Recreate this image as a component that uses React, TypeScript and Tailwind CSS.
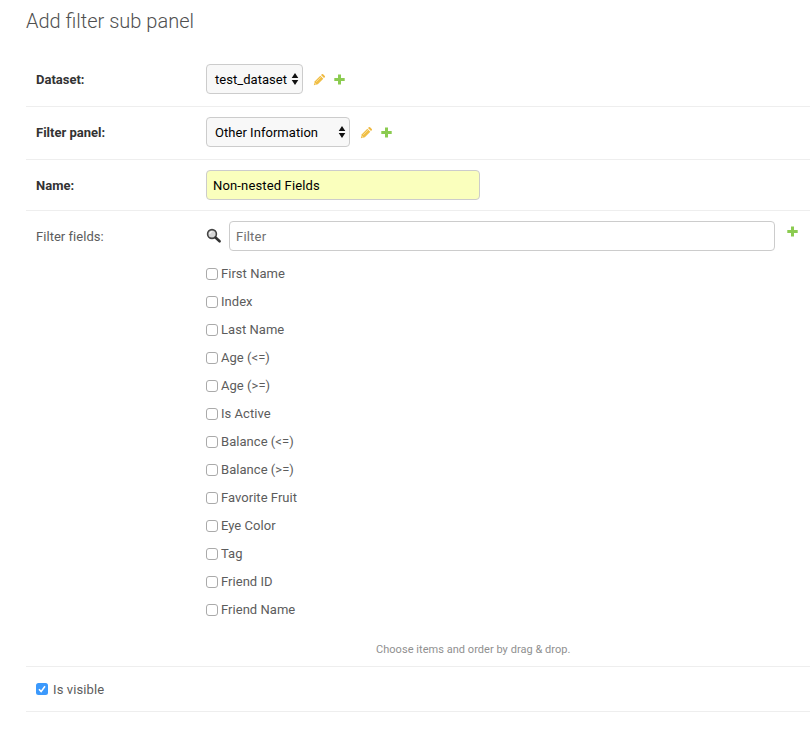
import React from "react";

const fields = [
  "First Name",
  "Index",
  "Last Name",
  "Age (<=)",
  "Age (>=)",
  "Is Active",
  "Balance (<=)",
  "Balance (>=)",
  "Favorite Fruit",
  "Eye Color",
  "Tag",
  "Friend ID",
  "Friend Name",
];

function Plus() {
  return (
    <svg className="block h-[13px] w-[13px]" viewBox="0 0 13 13">
      <path d="M5 1.5h3v3.5h3.7v3H8v3.5H5V8H1.3V5H5z" fill="#8bcb50" />
    </svg>
  );
}

function Pencil() {
  return (
    <svg className="block h-[13px] w-[13px]" viewBox="0 0 13 13">
      <path d="M.8 12.2l1-4L7.3 2.7l3 3-5.5 5.5z" fill="#f0be45" />
      <path d="M8 2l.8-.8q.7-.6 1.3 0l1.7 1.7q.6.6 0 1.3l-.8.8z" fill="#efb940" />
      <path d="M3.2 8.8l4.8-4.7" stroke="#fbe3a5" strokeWidth=".8" />
      <path d="M1.8 10.3l1 .9" stroke="#fff" strokeWidth=".8" />
    </svg>
  );
}

function Magnifier() {
  return (
    <svg className="block h-4 w-4" viewBox="0 0 16 16">
      <circle cx="6" cy="6" r="4.4" fill="#d6d6d6" stroke="#444" strokeWidth="1.6" />
      <path d="M3.7 6a2.6 2.6 0 0 1 2.6-2.4" fill="none" stroke="#fff" strokeWidth="1" />
      <path d="M9.5 9.5l4.1 3.8" stroke="#333" strokeWidth="2.6" strokeLinecap="round" />
    </svg>
  );
}

function Select({ text, width }: { text: string; width: string }) {
  return (
    <div className={`flex h-[30px] items-center justify-between rounded-[4px] border border-[#ccc] bg-[#f8f8f8] pr-[3px] pl-2 text-black ${width}`}>
      <span className="pt-0.5">{text}</span>
      <svg className="h-3 w-2" viewBox="0 0 8 12">
        <path d="M4 0l3.3 5H.7zM4 12L.7 7h6.6z" fill="#111" />
      </svg>
    </div>
  );
}

function Row({ label, height, children }: { label: string; height: string; children: React.ReactNode }) {
  return (
    <div className={`flex border-b border-[#eee] pt-[10px] pl-[10px] ${height}`}>
      <div className="h-[30px] w-[170px] leading-8 font-bold tracking-[0px] text-[#333]">{label}</div>
      {children}
    </div>
  );
}

export default function App() {
  return (
    <div className="h-[740px] w-[810px] overflow-hidden bg-white pl-[26px] font-['Roboto','Liberation_Sans',sans-serif] text-[13px] tracking-[0.04px] text-[#5c5c5c]">
      <h1 className="h-[54px] pt-[9px] text-[20px] leading-[25px] font-light tracking-[0px] text-[#505050]">Add filter sub panel</h1>
      <Row label="Dataset:" height="h-[53px]">
        <Select text="test_dataset" width="w-[97px]" />
        <div className="flex h-[30px] items-center gap-[7px] pl-[10px]">
          <Pencil />
          <Plus />
        </div>
      </Row>
      <Row label="Filter panel:" height="h-[53px]">
        <Select text="Other Information" width="w-[144px]" />
        <div className="flex h-[30px] items-center gap-[7px] pl-[10px]">
          <Pencil />
          <Plus />
        </div>
      </Row>
      <Row label="Name:" height="h-[51px]">
        <div className="flex h-[30px] w-[274px] items-center rounded-[4px] border border-[#ccc] bg-[#faffbd] pt-0.5 pl-1.5 tracking-[0.15px] text-black">
          Non-nested Fields
        </div>
      </Row>
      <div className="flex h-[456px] border-b border-[#eee] pt-[10px] pl-[10px]">
        <div className="w-[170px] leading-8">Filter fields:</div>
        <div className="w-[569px]">
          <div className="flex h-[30px] items-center">
            <Magnifier />
            <div className="ml-[7px] flex h-[30px] flex-1 items-center rounded-[4px] border border-[#ccc] pt-0.5 pl-1.5 tracking-[0.2px] text-[#707070]">Filter</div>
          </div>
          <ul className="pt-[9px]">
            {fields.map((f) => (
              <li key={f} className="flex h-7 items-center">
                <span className="mr-[3px] h-3 w-3 rounded-[3px] border border-[#aaa] bg-white" />
                <span>{f}</span>
              </li>
            ))}
          </ul>
          <p className="pt-[17px] pl-[170px] text-[11px] leading-[17px] text-[#909090]">Choose items and order by drag &amp; drop.</p>
        </div>
        <div className="pt-1 pl-[11px]">
          <Plus />
        </div>
      </div>
      <div className="flex h-[45px] items-center border-b border-[#eee] pl-[10px]">
        <svg className="mr-[5px] h-3 w-3" viewBox="0 0 12 12">
          <rect width="12" height="12" rx="2.5" fill="#3b99fc" />
          <path d="M3 6.3l2.1 2.3L9 3.2" fill="none" stroke="#fff" strokeWidth="1.6" />
        </svg>
        <span className="pt-0.5 tracking-[0.1px]">Is visible</span>
      </div>
    </div>
  );
}
